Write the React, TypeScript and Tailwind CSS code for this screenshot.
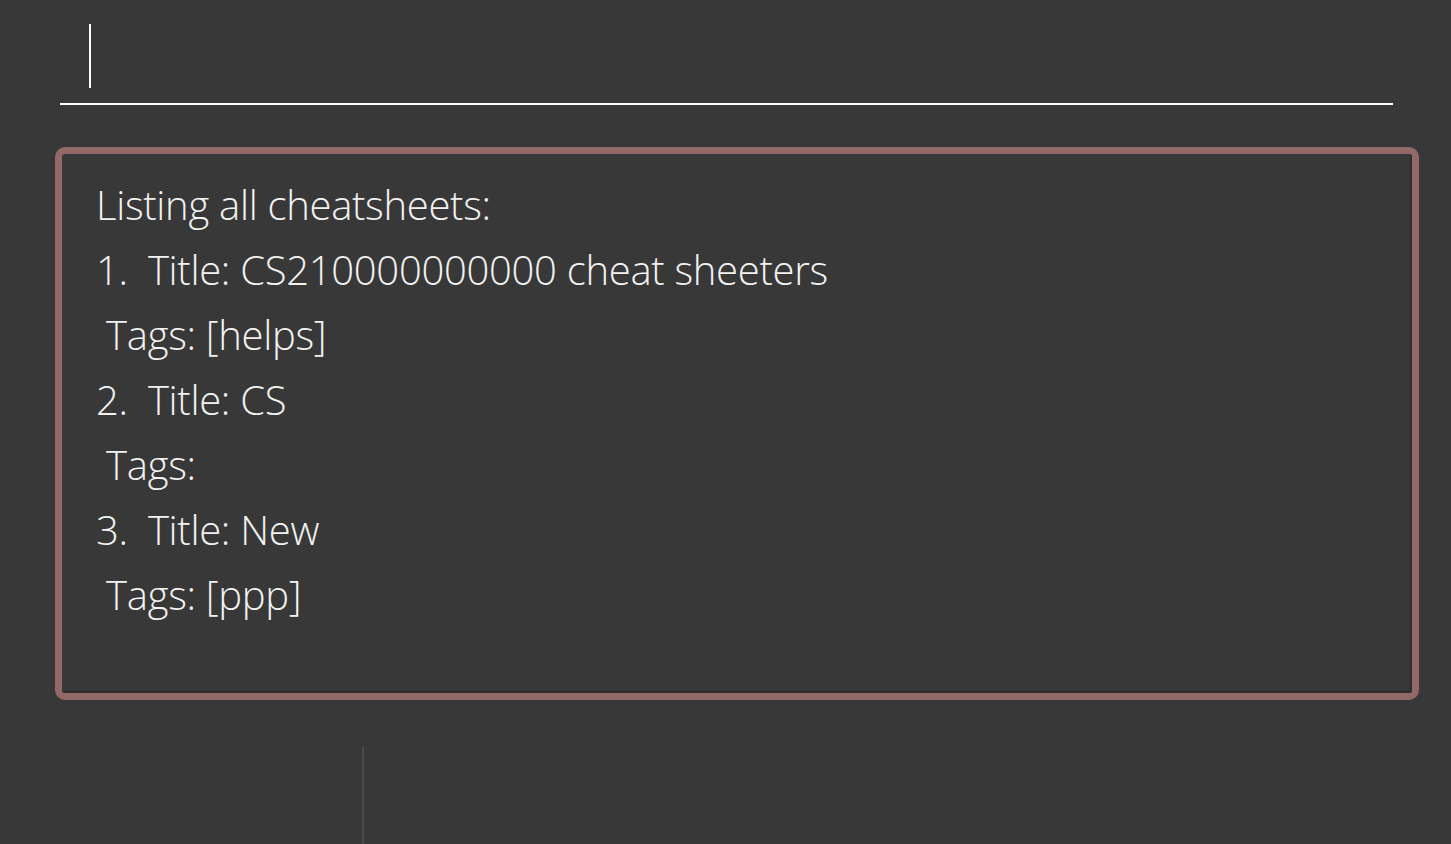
export default function App() {
  const lines = [
    'Listing all cheatsheets:',
    '1.  Title: CS210000000000 cheat sheeters',
    ' Tags: [helps]',
    '2.  Title: CS',
    ' Tags: ',
    '3.  Title: New',
    ' Tags: [ppp]',
  ];

  return (
    <div className="h-[844px] w-[1451px] overflow-hidden bg-[#383838] flex flex-col">
      {/* Command box */}
      <div className="pl-[60px] pr-[58px] pt-[24px]">
        <div className="h-[64px] pl-[29px] flex items-start">
          <div className="w-[2px] h-[64px] bg-white" />
        </div>
        <div className="mt-[15px] h-[2px] bg-white" />
      </div>

      {/* Result display */}
      <div className="ml-[55px] mr-[32px] mt-[42px] h-[553px] rounded-[10px] border-[7px] border-[#926868]">
        <div className="h-full rounded-[3px] border-r-2 border-b-2 border-[#2e2e2e] pl-[34px] pt-[18px]">
          {lines.map((line, i) => (
            <div
              key={i}
              className="h-[65px] whitespace-pre text-[40px] leading-[65px] font-light text-[#f2f2f2] font-['Open_Sans',sans-serif] tracking-[-0.3px]"
            >
              {line}
            </div>
          ))}
        </div>
      </div>

      {/* List panels */}
      <div className="mt-[47px] flex-1 flex">
        <div className="w-[362px]" />
        <div className="w-[2px] bg-[#4a4a4a]" />
      </div>
    </div>
  );
}
